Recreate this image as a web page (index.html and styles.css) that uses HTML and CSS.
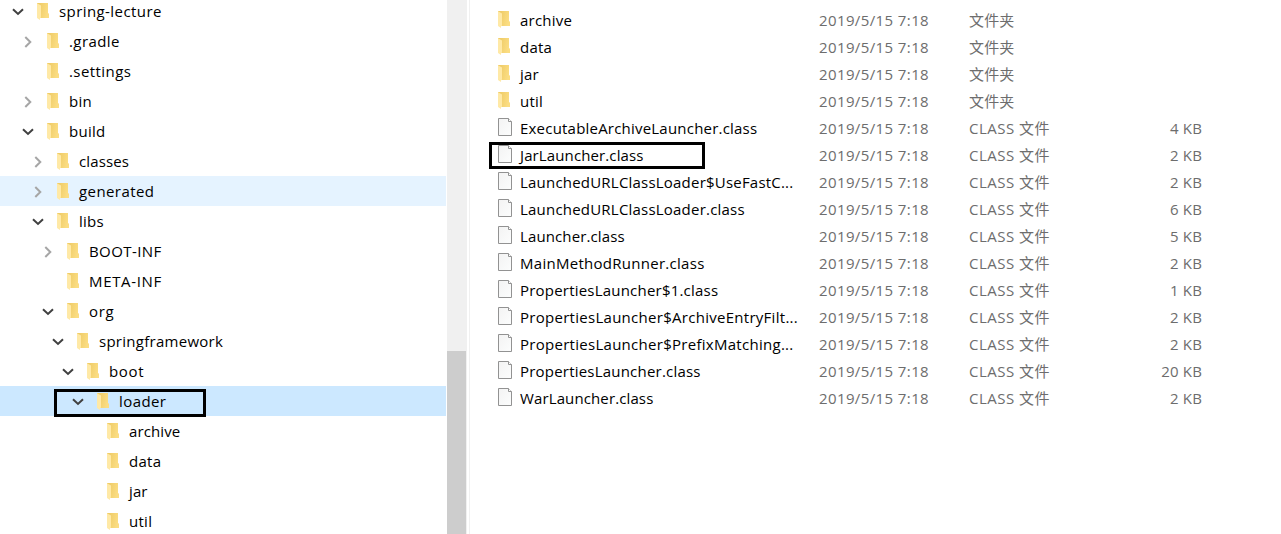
FILE: index.html
```html
<!DOCTYPE html>
<html lang="zh-CN">
<head>
<meta charset="utf-8">
<title>loader</title>
<link rel="stylesheet" href="styles.css">
</head>
<body>
<svg class="defs" aria-hidden="true">
  <defs>
    <linearGradient id="back" x1="0" x2="1" y1="0" y2="0.3"><stop offset="0.2" stop-color="#efcc68"/><stop offset="1" stop-color="#fbdd82"/></linearGradient>
    <linearGradient id="paper" x1="0" x2="1" y1="0" y2="1"><stop offset="0" stop-color="#f3f3f3"/><stop offset="1" stop-color="#fcfdfd"/></linearGradient>
  </defs>
  <symbol id="folder" viewBox="0 0 13 18"><path d="M0 0H11V10L12 10.8V15H0Z" fill="url(#back)"/><path d="M0 .3L4 2.6V14.5L3 15.5V17L0 15Z" fill="#ffe9a6"/></symbol>
  <symbol id="file" viewBox="0 0 15 19"><path d="M.5 .5H10.5L13.5 3.5V17.5H.5Z" fill="url(#paper)" stroke="#929292"/><path d="M10.5 .5V3.5H13.5" fill="#fff" stroke="#929292"/></symbol>
  <symbol id="open" viewBox="0 0 12 8"><path d="M1 1.3L6 6L11 1.3" fill="none" stroke="#404040" stroke-width="2"/></symbol>
  <symbol id="closed" viewBox="0 0 8 12"><path d="M1.3 1L6.3 6L1.3 11" fill="none" stroke="#a6a6a6" stroke-width="2"/></symbol>
</svg>
<div class="explorer">
  <nav class="tree">
    <div class="node l0"><span class="arrow"><svg class="open"><use href="#open"/></svg></span><svg class="folder"><use href="#folder"/></svg><span class="label wide">spring-lecture</span></div>
    <div class="node l1"><span class="arrow"><svg class="closed"><use href="#closed"/></svg></span><svg class="folder"><use href="#folder"/></svg><span class="label wide">.gradle</span></div>
    <div class="node l1"><span class="arrow"></span><svg class="folder"><use href="#folder"/></svg><span class="label wide">.settings</span></div>
    <div class="node l1"><span class="arrow"><svg class="closed"><use href="#closed"/></svg></span><svg class="folder"><use href="#folder"/></svg><span class="label">bin</span></div>
    <div class="node l1"><span class="arrow"><svg class="open"><use href="#open"/></svg></span><svg class="folder"><use href="#folder"/></svg><span class="label">build</span></div>
    <div class="node l2"><span class="arrow"><svg class="closed"><use href="#closed"/></svg></span><svg class="folder"><use href="#folder"/></svg><span class="label tight">classes</span></div>
    <div class="node l2 hover"><span class="arrow"><svg class="closed"><use href="#closed"/></svg></span><svg class="folder"><use href="#folder"/></svg><span class="label wide">generated</span></div>
    <div class="node l2"><span class="arrow"><svg class="open"><use href="#open"/></svg></span><svg class="folder"><use href="#folder"/></svg><span class="label">libs</span></div>
    <div class="node l3"><span class="arrow"><svg class="closed"><use href="#closed"/></svg></span><svg class="folder"><use href="#folder"/></svg><span class="label wide">BOOT-INF</span></div>
    <div class="node l3"><span class="arrow"></span><svg class="folder"><use href="#folder"/></svg><span class="label wider">META-INF</span></div>
    <div class="node l3"><span class="arrow"><svg class="open"><use href="#open"/></svg></span><svg class="folder"><use href="#folder"/></svg><span class="label wider">org</span></div>
    <div class="node l4"><span class="arrow"><svg class="open"><use href="#open"/></svg></span><svg class="folder"><use href="#folder"/></svg><span class="label">springframework</span></div>
    <div class="node l5"><span class="arrow"><svg class="open"><use href="#open"/></svg></span><svg class="folder"><use href="#folder"/></svg><span class="label wider">boot</span></div>
    <div class="node l6 selected"><span class="arrow"><svg class="open"><use href="#open"/></svg></span><svg class="folder"><use href="#folder"/></svg><span class="label wide">loader</span><span class="mark mark-tree"></span></div>
    <div class="node l7"><span class="arrow"></span><svg class="folder"><use href="#folder"/></svg><span class="label tight">archive</span></div>
    <div class="node l7"><span class="arrow"></span><svg class="folder"><use href="#folder"/></svg><span class="label">data</span></div>
    <div class="node l7"><span class="arrow"></span><svg class="folder"><use href="#folder"/></svg><span class="label tight">jar</span></div>
    <div class="node l7"><span class="arrow"></span><svg class="folder"><use href="#folder"/></svg><span class="label">util</span></div>
  </nav>
  <div class="scrollbar"><div class="thumb"></div></div>
  <div class="splitter"></div>
  <main class="files">
    <div class="row"><svg class="folder"><use href="#folder"/></svg><span class="name">archive</span><span class="date">2019/5/15 7:18</span><span class="type folder-type">文件夹</span><span class="size"></span></div>
    <div class="row"><svg class="folder"><use href="#folder"/></svg><span class="name">data</span><span class="date">2019/5/15 7:18</span><span class="type folder-type">文件夹</span><span class="size"></span></div>
    <div class="row"><svg class="folder"><use href="#folder"/></svg><span class="name">jar</span><span class="date">2019/5/15 7:18</span><span class="type folder-type">文件夹</span><span class="size"></span></div>
    <div class="row"><svg class="folder"><use href="#folder"/></svg><span class="name">util</span><span class="date">2019/5/15 7:18</span><span class="type folder-type">文件夹</span><span class="size"></span></div>
    <div class="row"><svg class="file"><use href="#file"/></svg><span class="name">ExecutableArchiveLauncher.class</span><span class="date">2019/5/15 7:18</span><span class="type">CLASS 文件</span><span class="size">4 KB</span></div>
    <div class="row"><svg class="file"><use href="#file"/></svg><span class="name tight">JarLauncher.class</span><span class="date">2019/5/15 7:18</span><span class="type">CLASS 文件</span><span class="size">2 KB</span><span class="mark mark-file"></span></div>
    <div class="row"><svg class="file"><use href="#file"/></svg><span class="name">LaunchedURLClassLoader$UseFastC...</span><span class="date">2019/5/15 7:18</span><span class="type">CLASS 文件</span><span class="size">2 KB</span></div>
    <div class="row"><svg class="file"><use href="#file"/></svg><span class="name">LaunchedURLClassLoader.class</span><span class="date">2019/5/15 7:18</span><span class="type">CLASS 文件</span><span class="size">6 KB</span></div>
    <div class="row"><svg class="file"><use href="#file"/></svg><span class="name tight">Launcher.class</span><span class="date">2019/5/15 7:18</span><span class="type">CLASS 文件</span><span class="size">5 KB</span></div>
    <div class="row"><svg class="file"><use href="#file"/></svg><span class="name loose">MainMethodRunner.class</span><span class="date">2019/5/15 7:18</span><span class="type">CLASS 文件</span><span class="size">2 KB</span></div>
    <div class="row"><svg class="file"><use href="#file"/></svg><span class="name">PropertiesLauncher$1.class</span><span class="date">2019/5/15 7:18</span><span class="type">CLASS 文件</span><span class="size">1 KB</span></div>
    <div class="row"><svg class="file"><use href="#file"/></svg><span class="name loose">PropertiesLauncher$ArchiveEntryFilt...</span><span class="date">2019/5/15 7:18</span><span class="type">CLASS 文件</span><span class="size">2 KB</span></div>
    <div class="row"><svg class="file"><use href="#file"/></svg><span class="name loose">PropertiesLauncher$PrefixMatching...</span><span class="date">2019/5/15 7:18</span><span class="type">CLASS 文件</span><span class="size">2 KB</span></div>
    <div class="row"><svg class="file"><use href="#file"/></svg><span class="name">PropertiesLauncher.class</span><span class="date">2019/5/15 7:18</span><span class="type">CLASS 文件</span><span class="size">20 KB</span></div>
    <div class="row"><svg class="file"><use href="#file"/></svg><span class="name tight">WarLauncher.class</span><span class="date">2019/5/15 7:18</span><span class="type">CLASS 文件</span><span class="size">2 KB</span></div>
  </main>
</div>
</body>
</html>
```
FILE: styles.css
```css
* { box-sizing: border-box; }
body {
  margin: 0;
  background: #fff;
  color: #000;
  font: 15px/20px "Open Sans", "Noto Sans CJK SC", sans-serif;
  overflow: hidden;
}
.defs { position: absolute; width: 0; height: 0; }
.explorer { display: flex; height: 534px; overflow: hidden; }
.tree { width: 446px; margin-right: 1px; margin-top: -4px; flex: none; }
.node { display: flex; align-items: center; height: 30px; position: relative; padding-left: 11px; }
.l1 { padding-left: 21px; }
.l2 { padding-left: 31px; }
.l3 { padding-left: 41px; }
.l4 { padding-left: 51px; }
.l5 { padding-left: 61px; }
.l6 { padding-left: 71px; }
.l7 { padding-left: 81px; }
.hover { background: #e5f3ff; }
.selected { background: #cce8ff; }
.arrow { width: 26px; height: 12px; display: flex; align-items: center; flex: none; }
.open { width: 12px; height: 8px; margin: 2px 0 0 0.5px; }
.closed { width: 8px; height: 12px; margin: 2px 0 0 3px; }
.folder { width: 13px; height: 18px; flex: none; }
.node .folder { margin-top: 2px; }
.file { width: 15px; height: 19px; flex: none; }
.label { margin-left: 9px; white-space: nowrap; letter-spacing: 0.27px; }
.name { letter-spacing: 0.21px; }
.tight { letter-spacing: 0.12px; }
.loose { letter-spacing: 0.28px; }
.wide { letter-spacing: 0.42px; }
.wider { letter-spacing: 0.65px; }
.scrollbar { width: 20px; background: #f0f0f0; flex: none; padding-top: 351px; }
.thumb { width: 19px; height: 183px; background: #cdcdcd; }
.splitter { width: 1px; margin-left: 2px; background: #f0f0f0; flex: none; }
.files { padding: 7px 0 0 28px; }
.row { display: grid; grid-template-columns: 22px 299px 150px 120px 113px; align-items: center; height: 27px; position: relative; white-space: nowrap; }
.row .folder { margin-top: -1px; }
.row .file { margin-top: -2px; }
.name, .date, .type, .size { padding-bottom: 2px; }
.date, .type, .size { color: #6d6d6d; }
.date { letter-spacing: 0.39px; }
.type { letter-spacing: 0.5px; }
.folder-type { letter-spacing: 0.15px; }
.size { text-align: right; letter-spacing: 0.15px; }
.mark { position: absolute; border: 3px solid #000; }
.mark-tree { left: 54px; top: 3px; width: 152px; height: 28px; }
.mark-file { left: -9px; top: 0; width: 216px; height: 27px; }
```
